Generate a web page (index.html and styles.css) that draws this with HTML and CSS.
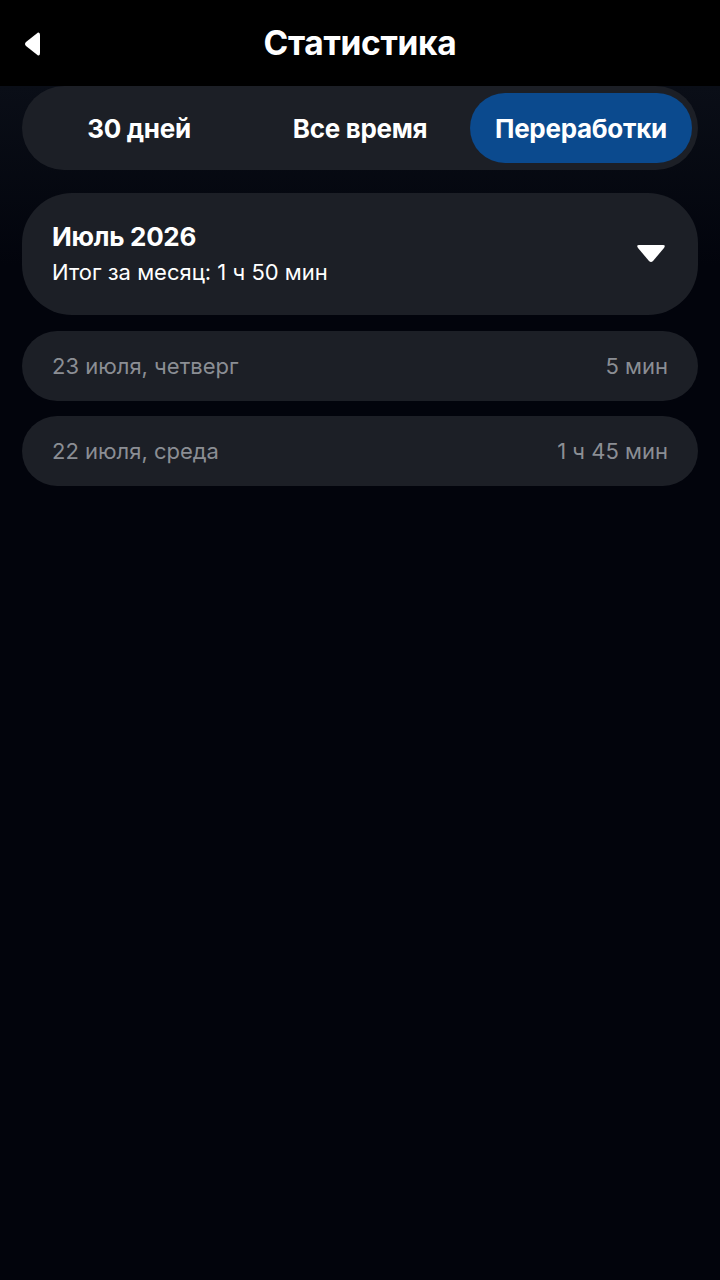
FILE: index.html
```html
<!DOCTYPE html>
<html lang="ru">
<head>
<meta charset="utf-8">
<link rel="stylesheet" href="styles.css">
</head>
<body>
<header class="topbar">
  <button class="back" aria-label="Назад">
    <svg width="18" height="28" viewBox="0 0 18 28"><path d="M15 2.5 Q17 2 17 5 L17 23 Q17 26 15 25.5 L3 16 Q1 14 3 12 Z" fill="#fff"/></svg>
  </button>
  <h1 class="title">Статистика</h1>
</header>
<main class="content">
  <nav class="tabs">
    <div class="tab">30 дней</div>
    <div class="tab">Все время</div>
    <div class="tab active">Переработки</div>
  </nav>
  <section class="month">
    <div class="month-text">
      <div class="month-title">Июль 2026</div>
      <div class="month-sub">Итог за месяц: 1 ч 50 мин</div>
    </div>
    <svg class="caret" width="30" height="22" viewBox="0 0 30 22"><path d="M3 2 L27 2 Q30 2 28 5 L17 18 Q15 20 13 18 L2 5 Q0 2 3 2 Z" fill="#fff"/></svg>
  </section>
  <div class="row"><span>23 июля, четверг</span><span>5 мин</span></div>
  <div class="row"><span>22 июля, среда</span><span>1 ч 45 мин</span></div>
</main>
</body>
</html>
```
FILE: styles.css
```css
* { box-sizing: border-box; }
html, body { margin: 0; padding: 0; }
body {
  width: 720px;
  height: 1280px;
  background: #02040c;
  font-family: Inter, "Noto Sans", sans-serif;
  color: #fff;
  overflow: hidden;
}
.topbar {
  height: 86px;
  background: #000;
  display: flex;
  align-items: center;
  justify-content: center;
  position: relative;
}
.back {
  position: absolute;
  left: 23px;
  top: 30px;
  background: none;
  border: 0;
  padding: 0;
  display: flex;
}
.title {
  margin: 0;
  font-size: 33.5px;
  font-weight: 700;
  letter-spacing: -0.3px;
}
.content {
  padding: 0 22px;
  display: flex;
  flex-direction: column;
  background: linear-gradient(#0a0e17 0, #02040c 180px);
}
.tabs {
  height: 84px;
  background: #1c1f26;
  border-radius: 42px;
  display: grid;
  grid-template-columns: 222px 220px 222px;
  padding: 7px 6px 7px 6px;
  align-items: center;
}
.tab {
  height: 70px;
  display: flex;
  align-items: center;
  justify-content: center;
  font-size: 26px;
  font-weight: 700;
  letter-spacing: -0.3px;
}
.tab.active {
  background: #0b4a8e;
  border-radius: 35px;
}
.month {
  margin-top: 23px;
  height: 122px;
  background: #1c1f26;
  border-radius: 50px;
  display: flex;
  align-items: center;
  justify-content: space-between;
  padding: 0 32px 0 30px;
}
.month-title {
  font-size: 26px;
  font-weight: 700;
  line-height: 30px;
  letter-spacing: -0.3px;
}
.month-sub {
  font-size: 22px;
  line-height: 28px;
  margin-top: 6px;
}
.row {
  margin-top: 16px;
  height: 70px;
  background: #1c1f26;
  border-radius: 35px;
  display: flex;
  align-items: center;
  justify-content: space-between;
  padding: 0 30px;
  font-size: 22px;
  color: #8b8e94;
}
.row + .row { margin-top: 15px; }
```
